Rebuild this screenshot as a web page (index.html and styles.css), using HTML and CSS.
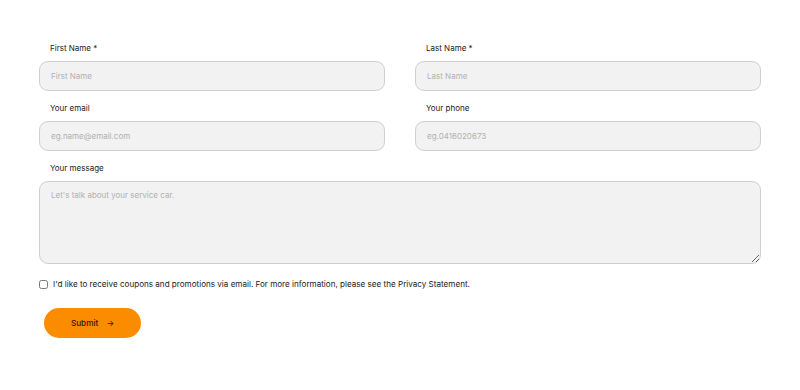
FILE: index.html
```html
<!DOCTYPE html>
<html lang="en">
<head>
    <meta charset="UTF-8">
    <meta name="viewport" content="width=device-width, initial-scale=1.0">
    <title>Contact Form</title>
    <link rel="stylesheet" href="styles.css">
</head>
<body>
    <form class="contact-form">
        <div class="form-row">
            <div class="form-group">
                <label for="firstName">First Name *</label>
                <input type="text" id="firstName" placeholder="First Name">
            </div>
            <div class="form-group">
                <label for="lastName">Last Name *</label>
                <input type="text" id="lastName" placeholder="Last Name">
            </div>
        </div>
        <div class="form-row">
            <div class="form-group">
                <label for="email">Your email</label>
                <input type="email" id="email" placeholder="eg.name@email.com">
            </div>
            <div class="form-group">
                <label for="phone">Your phone</label>
                <input type="tel" id="phone" placeholder="eg.0416020673">
            </div>
        </div>
        <div class="form-group">
            <label for="message">Your message</label>
            <textarea id="message" placeholder="Let's talk about your service car."></textarea>
        </div>
        <label class="consent">
            <input type="checkbox">
            <span>I'd like to receive coupons and promotions via email. For more information, please see the Privacy Statement.</span>
        </label>
        <button type="button" class="submit">Submit <span class="arrow">&rarr;</span></button>
    </form>
</body>
</html>
```

FILE: styles.css
```css
body {
    margin: 0;
    padding: 0;
    background: #fff;
    font-family: Inter, "Noto Sans", Arial, sans-serif;
    color: #111;
}
.contact-form {
    width: 722px;
    margin: 0 auto;
    padding-top: 42px;
}
.form-row {
    display: flex;
    gap: 30px;
}
.form-row .form-group {
    flex: 1;
}
.form-group {
    margin-bottom: 11px;
}
.form-group label {
    display: block;
    font-size: 8px;
    line-height: 12px;
    padding-left: 11px;
    margin-bottom: 7px;
    color: #1a1a1a;
}
.form-group input,
.form-group textarea {
    display: block;
    box-sizing: border-box;
    width: 100%;
    height: 30px;
    padding: 0 11px;
    font-family: inherit;
    font-size: 8px;
    background: #f2f2f2;
    border: 1px solid #cfcfcf;
    border-radius: 9px;
    color: #333;
    outline: none;
}
.form-group textarea {
    height: 83px;
    padding: 8px 11px;
    resize: vertical;
}
.form-group input::placeholder,
.form-group textarea::placeholder {
    color: #b0b0b0;
}
.consent {
    display: flex;
    align-items: center;
    gap: 5px;
    margin-top: 14px;
    font-size: 8.1px;
    line-height: 12px;
    color: #1a1a1a;
}
.consent input {
    margin: 0;
    width: 9px;
    height: 9px;
}
.submit {
    display: block;
    margin: 18px 0 0 5px;
    width: 97px;
    height: 30px;
    border: none;
    border-radius: 15px;
    background: #fb8c00;
    color: #2a1a00;
    font-family: inherit;
    font-size: 8.2px;
    font-weight: 500;
    cursor: pointer;
}
.submit .arrow {
    margin-left: 6px;
    font-size: 8px;
}
```
